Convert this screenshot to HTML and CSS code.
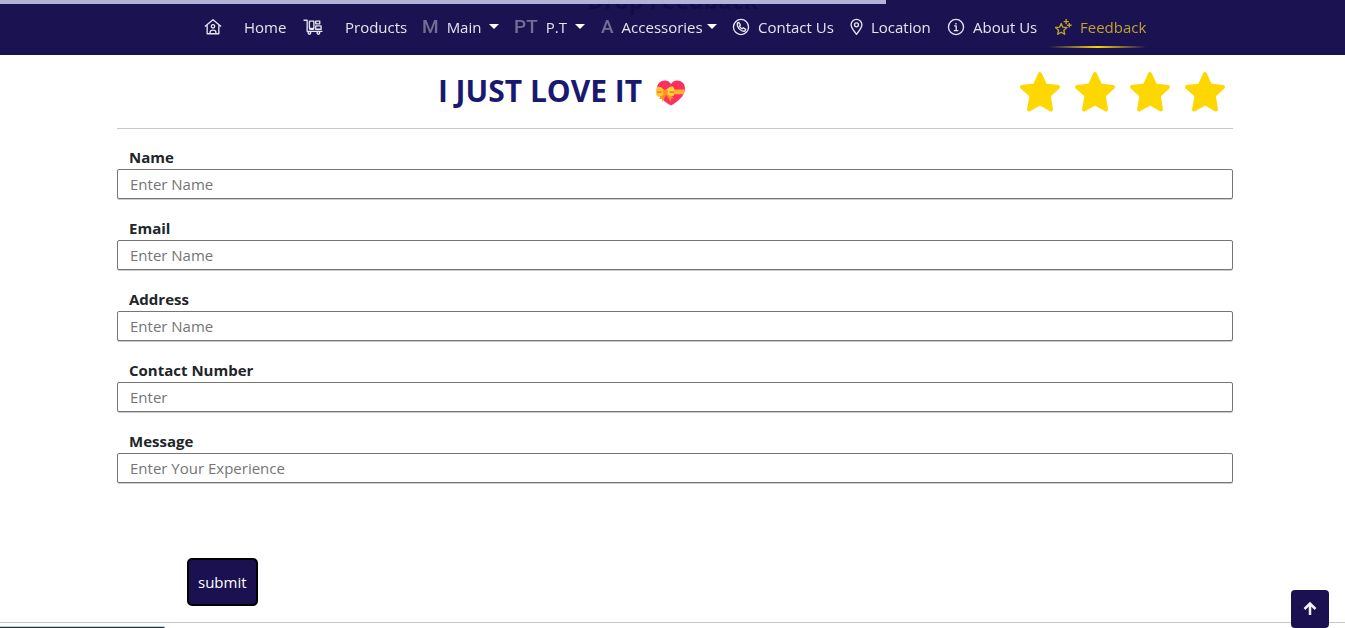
FILE: index.html
```html
<!DOCTYPE html>
<html lang="en">
<head>
<meta charset="utf-8">
<title>Feedback</title>
<link rel="stylesheet" href="styles.css">
</head>
<body>
<nav class="navbar">
  <a class="nav-link home" href="#"><svg class="icon" viewBox="0 0 20 20"><path d="M1 9.5 10 2l9 7.500M3.500 8v9.500h13V8M6.800 17.200v-1.400c0-3.200 6.400-3.200 6.400 0v1.400"/><circle cx="10" cy="9.3" r="1.9"/></svg><span>Home</span></a>
  <a class="nav-link products" href="#"><svg class="icon trolley" viewBox="0 0 22 20"><path d="M.5 2.500h4v12.300h17M7 3.500h5v8H7zM14 3.500h4.500v3H14zM14 8.800h6v3.700h-6zM7 12.500h5"/><circle cx="7" cy="16.5" r="1.5"/><circle cx="17" cy="16.5" r="1.5"/></svg><span>Products</span></a>
  <a class="nav-link main-menu" href="#"><span class="initial">M</span><span>Main</span><i class="caret"></i></a>
  <a class="nav-link pt-menu" href="#"><span class="initial">PT</span><span>P.T</span><i class="caret"></i></a>
  <a class="nav-link accessories" href="#"><span class="initial">A</span><span>Accessories</span><i class="caret"></i></a>
  <a class="nav-link contact" href="#"><svg class="icon" viewBox="0 0 20 20"><circle cx="10" cy="10" r="8.4"/><path d="M6 5.500 7.700 5l1.700 2.800-1.100 1.400c.7 1.400 1.600 2.300 2.900 2.800l1.400-1.100 2.600 1.700-.7 2c-4.400 1.100-9.500-4-8.500-9.100z"/></svg><span>Contact Us</span></a>
  <a class="nav-link location" href="#"><svg class="icon pin" viewBox="0 0 14 20"><path d="M7 18.200C4.600 14.700 1 11.300 1 7.600a6 6 0 0 1 12 0c0 3.700-3.600 7.100-6 10.600z"/><circle cx="7" cy="7.6" r="2.2"/></svg><span>Location</span></a>
  <a class="nav-link about" href="#"><svg class="icon" viewBox="0 0 20 20"><circle cx="10" cy="10" r="8.4"/><path d="M8 8.800h2.200v5M7.600 14h5M9.900 5.500v1.600"/></svg><span>About Us</span></a>
  <a class="nav-link feedback" href="#"><svg class="icon" viewBox="0 0 20 20"><path d="m8 6 1.800 4.200 4.500.4-3.400 3 1 4.500L8 15.800l-3.900 2.300 1-4.500-3.400-3 4.500-.4zM13.500 1v6M10.700 4h5.800M17 5.500v5M14.600 8h5"/></svg><span>Feedback</span></a>
</nav>
<div class="scroll-progress"></div>
<main>
  <h1 class="page-title">Drop Feedback</h1>
  <section class="content">
    <header class="rating">
      <h2 class="rating-title">I JUST LOVE IT
        <svg class="heart" viewBox="0 0 30 26" role="img" aria-label="Heart with ribbon"><path fill="#fc2f5e" d="M15 25.500C8 21.500 1 15.500 1 8.500 1 0 11.500-2 15 4c3.500-6 14-4 14 4.500 0 7-7 13-14 17z"/><path fill="#ffb02e" d="M10 9.500h19c-.1 1.700-.6 3.200-1.400 4.700H10z"/><path fill="#ff9324" d="M7.500 13 3 19l2.900.1.800 2.900L10 14.500l4.600 7 .6-2.900 3-.3-6.500-5.300z"/><path fill="#ffc52e" d="M9.500 11.800C6.500 6.800 2 6 .9 7.600c-1 1.700-1 7 0 8.500 1.100 1.500 6.200.5 8.600-4.300z"/><path fill="#ffd43a" d="M9.500 11.800c2-5.200 7-6.200 8.200-4.400 1 1.700 1.100 6.300.1 8-1.200 1.700-5.800.8-8.300-3.600z"/><path fill="#f9842c" d="M1 11.300h4.500v1.700H1zM13.500 11.300H18V13h-4.500z"/><circle fill="#ff9324" cx="9.500" cy="12" r="2.500"/></svg>
      </h2>
      <div class="stars" role="img" aria-label="4 stars">
        <svg class="star" viewBox="0 0 42 42"><path d="m21 3 5.200 11.500 12.800 1.400-9.300 8.500L32 38.500l-11-6.200-11 6.200 2.600-14.100L3 15.900l12.800-1.400z"/></svg>
        <svg class="star" viewBox="0 0 42 42"><path d="m21 3 5.200 11.500 12.800 1.400-9.300 8.500L32 38.500l-11-6.200-11 6.200 2.600-14.100L3 15.900l12.800-1.400z"/></svg>
        <svg class="star" viewBox="0 0 42 42"><path d="m21 3 5.200 11.500 12.800 1.400-9.300 8.500L32 38.500l-11-6.200-11 6.200 2.600-14.100L3 15.900l12.800-1.400z"/></svg>
        <svg class="star" viewBox="0 0 42 42"><path d="m21 3 5.200 11.500 12.800 1.400-9.300 8.500L32 38.500l-11-6.200-11 6.200 2.600-14.100L3 15.900l12.800-1.400z"/></svg>
      </div>
    </header>
    <form class="form">
      <div class="field"><label for="name">Name</label><input id="name" type="text" placeholder="Enter Name"></div>
      <div class="field"><label for="email">Email</label><input id="email" type="email" placeholder="Enter Name"></div>
      <div class="field"><label for="address">Address</label><input id="address" type="text" placeholder="Enter Name"></div>
      <div class="field"><label for="phone">Contact Number</label><input id="phone" type="tel" placeholder="Enter"></div>
      <div class="field"><label for="message">Message</label><input id="message" type="text" placeholder="Enter Your Experience"></div>
      <button class="submit" type="submit">submit</button>
    </form>
  </section>
  <hr class="divider">
</main>
<div class="status"></div>
<button class="to-top" type="button" aria-label="Back to top"><svg viewBox="0 0 16 16"><path d="M8 14V3M2.500 8 8 2.500 13.500 8"/></svg></button>
</body>
</html>
```
FILE: styles.css
```css
* { box-sizing: border-box; }
body {
  margin: 0;
  background: #fff;
  color: #212529;
  font: 15px/24px "Open Sans", "Noto Sans", sans-serif;
  overflow: hidden;
}
.navbar {
  position: fixed;
  z-index: 2;
  top: 0;
  left: 0;
  right: 0;
  height: 55px;
  padding-bottom: 2px;
  display: flex;
  justify-content: center;
  align-items: center;
  background: rgba(20, 10, 75, 0.97);
}
.nav-link {
  display: flex;
  align-items: center;
  gap: 8px;
  height: 38px;
  padding: 0 8px;
  color: #e6e4ee;
  font-weight: 500;
  text-decoration: none;
  white-space: nowrap;
}
.home { width: 99px; gap: 22px; }
.products { width: 119px; gap: 22px; }
.main-menu { width: 92px; }
.pt-menu { width: 87px; }
.accessories { width: 131px; }
.contact { width: 118px; }
.location { width: 97px; }
.about { width: 107px; }
.feedback {
  width: 103px;
  position: relative;
  color: #bfa32c;
}
.feedback::after {
  content: "";
  position: absolute;
  left: 3px;
  right: 3px;
  bottom: -2px;
  height: 2px;
  background: linear-gradient(90deg, transparent, #ffd700, transparent);
}
.icon {
  flex: none;
  width: 18px;
  height: 18px;
  fill: none;
  stroke: currentColor;
  stroke-width: 1.5;
  stroke-linejoin: round;
}
.trolley { width: 20px; }
.pin { width: 13px; }
.initial {
  color: #746d94;
  font: 500 19px/24px Roboto, "Noto Sans", sans-serif;
}
.caret {
  border: 5px solid transparent;
  border-top-color: #fff;
  border-bottom: 0;
}
.accessories .caret { margin-left: -4px; }
.scroll-progress {
  position: fixed;
  z-index: 3;
  top: 0;
  left: 0;
  width: 65.9%;
  height: 4px;
  background: #b3b3d9;
}
.page-title {
  height: 55px;
  margin: 0;
  font-size: 23px;
  line-height: 0;
  text-align: center;
  color: #000;
}
.content { padding: 0 112px 0 117px; }
.rating {
  display: flex;
  align-items: center;
  height: 74px;
  border-bottom: 1px solid #c8c8c8;
}
.rating-title {
  flex: 1;
  display: flex;
  justify-content: center;
  align-items: center;
  gap: 14px;
  margin: 0;
  padding-bottom: 2px;
  color: #191970;
  font-size: 30px;
  line-height: 36px;
}
.heart { width: 30px; height: 26px; margin-top: 4px; }
.stars {
  display: flex;
  gap: 13px;
  padding: 0 7px 0 12px;
}
.star {
  width: 42px;
  height: 42px;
  fill: #ffd700;
  stroke: #ffd700;
  stroke-width: 4;
  stroke-linejoin: round;
}
.form { padding-top: 16px; }
.field {
  display: flex;
  flex-direction: column;
  margin-bottom: 17px;
}
.field label {
  padding: 0 12px;
  font-weight: 700;
}
.field input {
  height: 30px;
  padding: 1px 12px;
  border: 1px solid #767676;
  border-radius: 2px;
  box-shadow: 0 1px #ccc;
  background: #fff;
  color: #212529;
  font: inherit;
}
.field input::placeholder { color: #757575; }
.submit {
  display: block;
  height: 48px;
  margin: 75px 0 16px 70px;
  padding: 0 9px;
  border: 2px solid #000;
  border-radius: 5px;
  background: #1b1150;
  color: #fff;
  font: inherit;
}
.divider {
  margin: 0;
  border: 0;
  border-top: 1px solid #c8c8c8;
}
.status {
  position: fixed;
  left: 0;
  bottom: 0;
  width: 165px;
  height: 2px;
  border-top: 1px solid #ccc;
  border-top-right-radius: 2px;
  background: #123b40;
}
.to-top {
  position: fixed;
  right: 16px;
  bottom: 0;
  width: 38px;
  height: 38px;
  padding: 0;
  display: grid;
  place-items: center;
  border: 0;
  border-radius: 4px;
  background: #1b1150;
}
.to-top svg {
  width: 16px;
  height: 16px;
  fill: none;
  stroke: #f1f0f6;
  stroke-width: 2.5;
}
```
